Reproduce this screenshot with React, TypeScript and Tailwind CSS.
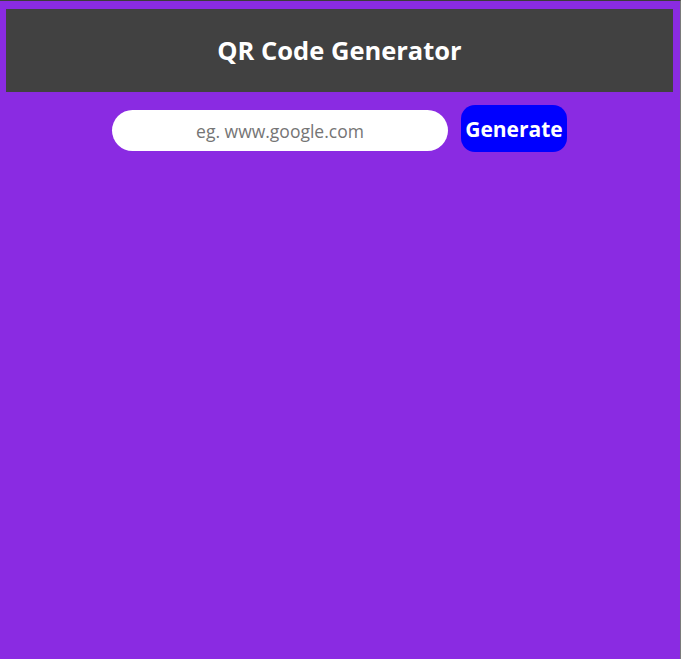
import React from "react";

const App: React.FC = () => {
  return (
    <div
      className="min-h-[659px] bg-[#8a2be2] border-t border-t-[#3c3c3c] border-r border-r-[#7a7a7a]"
      style={{ fontFamily: '"Open Sans", "Noto Sans", sans-serif' }}
    >
      <div className="pt-[8px] pl-[6px] pr-[7px]">
        <header className="h-[83px] bg-[#414141] flex items-center justify-center">
          <h1 className="text-[25.5px] font-bold text-white">QR Code Generator</h1>
        </header>
      </div>

      <div className="flex items-end justify-center gap-[13px] mt-[13px] pr-px">
        <input
          type="text"
          placeholder="eg. www.google.com"
          className="w-[336px] h-[41px] mb-px rounded-full bg-white text-center text-[17.5px] text-gray-800 placeholder:text-[#757575] outline-none"
        />
        <button className="w-[106px] h-[47px] pt-[3px] rounded-[14px] bg-[#0000ff] text-white text-[21px] font-bold">
          Generate
        </button>
      </div>
    </div>
  );
};

export default App;
